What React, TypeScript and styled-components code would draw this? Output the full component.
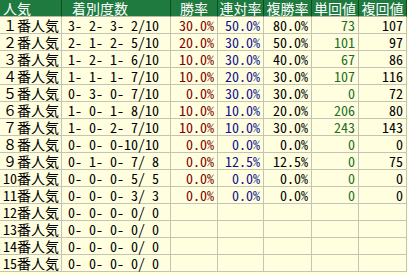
import React from 'react';
import styled, { createGlobalStyle } from 'styled-components';

const GlobalStyle = createGlobalStyle`
body {
  margin: 0;
  background: #ffffe0;
  font-family: "Noto Sans CJK JP", "Liberation Sans", sans-serif;
}
`;

const COLS = '62px 109px 47px 46px 48px 47px 48px';

const StyledTable = styled.div`
width: 407px;
background: #ffffe0;
`;

const StyledRow = styled.div`
display: grid;
grid-template-columns: ${COLS};
height: 17px;
`;

const StyledHeadCell = styled.div<{ $align?: string; $pad?: number }>`
box-sizing: border-box;
height: 17px;
background: #1e7a3e;
color: #ffffff;
font-size: 14px;
line-height: 16px;
text-align: ${p => p.$align || 'center'};
padding: 0 0 0 ${p => p.$pad ?? 0}px;
border-right: 1px solid #0e4d24;
border-bottom: 1px solid #b8b8a8;
white-space: pre;
`;

const StyledCell = styled.div<{ $color?: string }>`
box-sizing: border-box;
height: 17px;
color: ${p => p.$color || '#000000'};
font-size: 14px;
line-height: 16px;
font-feature-settings: "hwid";
text-align: right;
padding: 0 3px;
border-right: 1px solid #c4c4b4;
border-bottom: 1px solid #c4c4b4;
white-space: pre;
`;

const StyledNameCell = styled(StyledCell)`
text-align: left;
padding-left: 3px;
font-feature-settings: normal;
`;

const StyledHalfDigits = styled.span`
font-feature-settings: "hwid";
`;

const StyledCountCell = styled(StyledCell)`
text-align: left;
padding-left: 6px;
`;

type Row = [string, string, string, string, string, string, string];

const rows: Row[] = [
  ['１', '3- 2- 3- 2/10', '30.0%', '50.0%', '80.0%', '73', '107'],
  ['２', '2- 1- 2- 5/10', '20.0%', '30.0%', '50.0%', '101', '97'],
  ['３', '1- 2- 1- 6/10', '10.0%', '30.0%', '40.0%', '67', '86'],
  ['４', '1- 1- 1- 7/10', '10.0%', '20.0%', '30.0%', '107', '116'],
  ['５', '0- 3- 0- 7/10', '0.0%', '30.0%', '30.0%', '0', '72'],
  ['６', '1- 0- 1- 8/10', '10.0%', '10.0%', '20.0%', '206', '80'],
  ['７', '1- 0- 2- 7/10', '10.0%', '10.0%', '30.0%', '243', '143'],
  ['８', '0- 0- 0-10/10', '0.0%', '0.0%', '0.0%', '0', '0'],
  ['９', '0- 1- 0- 7/ 8', '0.0%', '12.5%', '12.5%', '0', '75'],
  ['10', '0- 0- 0- 5/ 5', '0.0%', '0.0%', '0.0%', '0', '0'],
  ['11', '0- 0- 0- 3/ 3', '0.0%', '0.0%', '0.0%', '0', '0'],
  ['12', '0- 0- 0- 0/ 0', '', '', '', '', ''],
  ['13', '0- 0- 0- 0/ 0', '', '', '', '', ''],
  ['14', '0- 0- 0- 0/ 0', '', '', '', '', ''],
  ['15', '0- 0- 0- 0/ 0', '', '', '', '', ''],
];

const App: React.FC = () => {
  return (
    <>
      <GlobalStyle />
      <StyledTable>
        <StyledRow>
          <StyledHeadCell $align="left" $pad={3}>人気</StyledHeadCell>
          <StyledHeadCell $align="left" $pad={10}>着別度数</StyledHeadCell>
          <StyledHeadCell>勝率</StyledHeadCell>
          <StyledHeadCell>連対率</StyledHeadCell>
          <StyledHeadCell>複勝率</StyledHeadCell>
          <StyledHeadCell>単回値</StyledHeadCell>
          <StyledHeadCell>複回値</StyledHeadCell>
        </StyledRow>
        {rows.map(r => (
          <StyledRow key={r[0]}>
            <StyledNameCell>
              {r[0].length > 1 ? <StyledHalfDigits>{r[0]}</StyledHalfDigits> : r[0]}番人気
            </StyledNameCell>
            <StyledCountCell>{r[1]}</StyledCountCell>
            <StyledCell $color="#800000">{r[2]}</StyledCell>
            <StyledCell $color="#101090">{r[3]}</StyledCell>
            <StyledCell>{r[4]}</StyledCell>
            <StyledCell $color="#1f6e1f">{r[5]}</StyledCell>
            <StyledCell>{r[6]}</StyledCell>
          </StyledRow>
        ))}
      </StyledTable>
    </>
  );
}

export default App;
